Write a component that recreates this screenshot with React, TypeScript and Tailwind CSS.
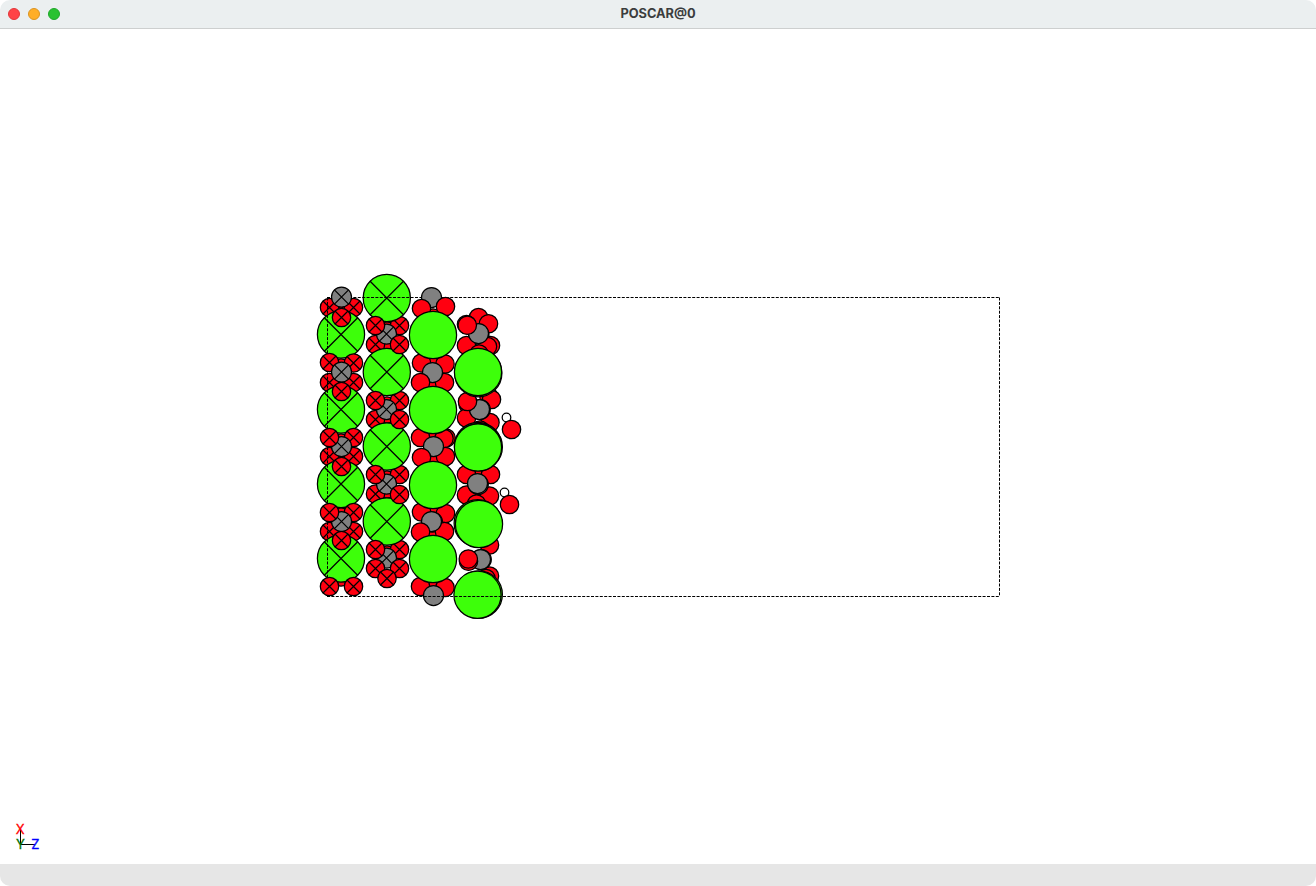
type Kind = "Ca" | "C" | "O" | "H";
type Atom = [Kind, number, number, boolean?];

const radius: Record<Kind, number> = { Ca: 23.6, C: 10, O: 9.2, H: 4.3 };
const fill: Record<Kind, string> = { Ca: "#3dff0a", C: "#808080", O: "#ff0010", H: "#ffffff" };

// Each layer is ordered from the furthest atom to the nearest one.
const lowerAtoms: Atom[] = [
  // first column
  ["O", 341, 309, true],
  ["O", 329.5, 307.5, true], ["O", 353.5, 307.5, true],
  ["O", 341, 368, true], ["O", 341, 381, true],
  ["O", 329.5, 382.5, true], ["O", 353.5, 382.5, true],
  ["O", 341, 443, true], ["O", 341, 456, true],
  ["O", 329.5, 456.5, true], ["O", 353.5, 456.5, true],
  ["O", 341, 517, true], ["O", 341, 530, true],
  ["O", 329.5, 531.5, true], ["O", 353.5, 531.5, true],
  ["O", 341, 577, true],
  ["Ca", 341, 334.5, true], ["Ca", 341, 409.5, true],
  ["Ca", 341, 484, true], ["Ca", 341, 558.5, true],
  // second column
  ["O", 387, 331, true], ["O", 387, 340, true],
  ["O", 387, 406, true], ["O", 387, 414, true],
  ["O", 387, 480, true], ["O", 387, 489, true],
  ["O", 387, 555, true],
  ["O", 375.5, 344.5, true], ["O", 375.5, 419.5, true], ["O", 375.5, 494, true],
  ["O", 399.5, 325.5, true], ["O", 399.5, 400.5, true], ["O", 399.5, 474.5, true], ["O", 399.5, 549.5, true],
  ["Ca", 386.8, 298, true], ["Ca", 386.8, 372, true],
  ["Ca", 386.8, 446.5, true], ["Ca", 386.8, 521.5, true],
];

const upperAtoms: Atom[] = [
  // first column
  ["C", 341.5, 297, true], ["O", 341.5, 317.5, true],
  ["O", 353.5, 363, true], ["O", 329.5, 362.5, true], ["C", 341.5, 372, true], ["O", 341.5, 391.5, true],
  ["O", 353.5, 437.5, true], ["C", 341.5, 446.5, true], ["O", 329.5, 437.5, true], ["O", 341.5, 466.5, true],
  ["O", 353.5, 512.5, true], ["C", 341.5, 521.5, true], ["O", 329.5, 512.5, true], ["O", 341.5, 540.5, true],
  ["O", 353.5, 586.5, true], ["O", 329.5, 586.5, true],
  // second column
  ["C", 386.5, 334, true], ["O", 375.5, 325.5, true], ["O", 399.5, 344.5, true],
  ["C", 386.5, 409.5, true], ["O", 375.5, 400.5, true], ["O", 399.5, 419.5, true],
  ["C", 386.5, 484, true], ["O", 375.5, 474.5, true], ["O", 399.5, 494.5, true],
  ["C", 386.5, 558, true], ["O", 375.5, 549.5, true], ["O", 375.5, 568.5, true],
  ["O", 399.5, 568.5, true], ["O", 387, 578.5, true],
  // third column
  ["O", 433, 318], ["C", 431.5, 297.5], ["O", 421.5, 308.5], ["O", 445.5, 306.5],
  ["O", 433, 355], ["O", 433, 364], ["O", 433, 383],
  ["O", 421.5, 363], ["O", 445, 364], ["O", 444.5, 382.5],
  ["C", 432.5, 372.5], ["O", 420.5, 382.5],
  ["O", 433, 439], ["O", 433, 456], ["O", 446, 438], ["O", 420.5, 437.5], ["O", 444, 438.5],
  ["O", 445.5, 456.5], ["C", 433.5, 446.5], ["O", 421.5, 457.5],
  ["O", 433, 513], ["O", 433, 531], ["O", 421.5, 512], ["O", 445.5, 513.5],
  ["C", 432.5, 522], ["O", 444.5, 531.5], ["C", 431.5, 521.5], ["O", 420.5, 532],
  ["O", 433, 586], ["O", 420.5, 586.5], ["O", 445, 587.5], ["C", 433.5, 595.5],
  ["Ca", 433, 335], ["Ca", 433, 410], ["Ca", 433, 485], ["Ca", 433, 559],
  // fourth column
  ["O", 478.5, 317.5], ["O", 466.5, 324.5], ["O", 488.5, 323.7],
  ["C", 479, 335], ["O", 466.5, 345.5], ["O", 490.5, 345.5], ["O", 487.5, 346.5],
  ["O", 479, 354], ["C", 478.5, 333.5], ["O", 467.3, 325.3],
  ["O", 489, 397], ["O", 491.5, 399.5], ["O", 468, 404],
  ["O", 466.5, 418], ["O", 490, 422.5],
  ["O", 480, 430], ["C", 480.3, 409.5], ["C", 479.5, 409.5], ["O", 467.5, 401.5],
  ["O", 478, 477], ["O", 490.5, 474.5], ["O", 466.5, 474.5],
  ["O", 466.5, 495], ["O", 489.5, 496], ["C", 478.3, 484.6], ["C", 477.5, 483.5],
  ["O", 476.5, 504],
  ["O", 489.5, 545], ["O", 489.5, 576], ["O", 486, 578.5],
  ["C", 481.3, 559.5], ["C", 480.5, 559.5], ["O", 468.5, 561.2], ["O", 468.3, 559],
  ["Ca", 478.3, 373.2], ["Ca", 478, 372],
  ["Ca", 478, 446], ["Ca", 478.8, 447], ["Ca", 478, 447.5],
  ["Ca", 477.7, 523.2], ["Ca", 479, 524],
  ["Ca", 478.8, 594.5], ["Ca", 477.5, 594.8],
  ["H", 506.5, 417.5], ["O", 511.5, 429.5],
  ["H", 504.5, 492.5], ["O", 509.5, 504.5],
];

function Atoms({ list }: { list: Atom[] }) {
  return (
    <>
      {list.map(([kind, x, y, fixed], i) => {
        const r = radius[kind];
        const d = r * 0.707;
        return (
          <g key={i} stroke="#000" strokeWidth={1.25}>
            <circle cx={x} cy={y} r={r} fill={fill[kind]} />
            {fixed && (
              <path d={`M${x - d} ${y - d}L${x + d} ${y + d}M${x + d} ${y - d}L${x - d} ${y + d}`} />
            )}
          </g>
        );
      })}
    </>
  );
}

export default function App() {
  return (
    <div className="flex h-[886px] w-[1316px] flex-col overflow-hidden rounded-[10px] bg-white font-['Inter',sans-serif]">
      <header className="grid h-[29px] shrink-0 grid-cols-[1fr_auto_1fr] items-center border-b border-[#cdcfcf] bg-[#ebeff0] px-2">
        <div className="flex gap-2">
          <span className="size-3 rounded-full border border-[#e2383b] bg-[#ff4447]" />
          <span className="size-3 rounded-full border border-[#db9422] bg-[#ffae27]" />
          <span className="size-3 rounded-full border border-[#1fa82a] bg-[#29c231]" />
        </div>
        <h1 className="text-[12.8px] leading-4 font-bold text-[#3b3d3e]">POSCAR@0</h1>
      </header>
      <main className="h-[835px] shrink-0">
        <svg width="1316" height="835" viewBox="0 29 1316 835" className="block">
          <Atoms list={lowerAtoms} />
          <g stroke="#000" strokeWidth="1" strokeDasharray="3 1.4" fill="none">
            <path d="M327.5 297.5V596.5" />
            <path d="M327 297.5H999.5" />
            <path d="M999.5 297.5V596.5" />
          </g>
          <Atoms list={upperAtoms} />
          <path d="M327 596.5H1000" stroke="#000" strokeDasharray="3 1.4" />
          <path d="M20.5 829V844.5H35" fill="none" stroke="#000" shapeRendering="crispEdges" />
          <g fontFamily="Inter, sans-serif" fontSize="13" textAnchor="middle" strokeWidth=".3">
            <text x="20.3" y="834" fill="#ff0000" stroke="#ff0000">X</text>
            <text x="20.3" y="849" fill="#007000" stroke="#007000">Y</text>
            <text x="35.3" y="849" fill="#0000ff" stroke="#0000ff">Z</text>
          </g>
        </svg>
      </main>
      <footer className="h-[22px] shrink-0 bg-[#e6e6e6]" />
    </div>
  );
}
